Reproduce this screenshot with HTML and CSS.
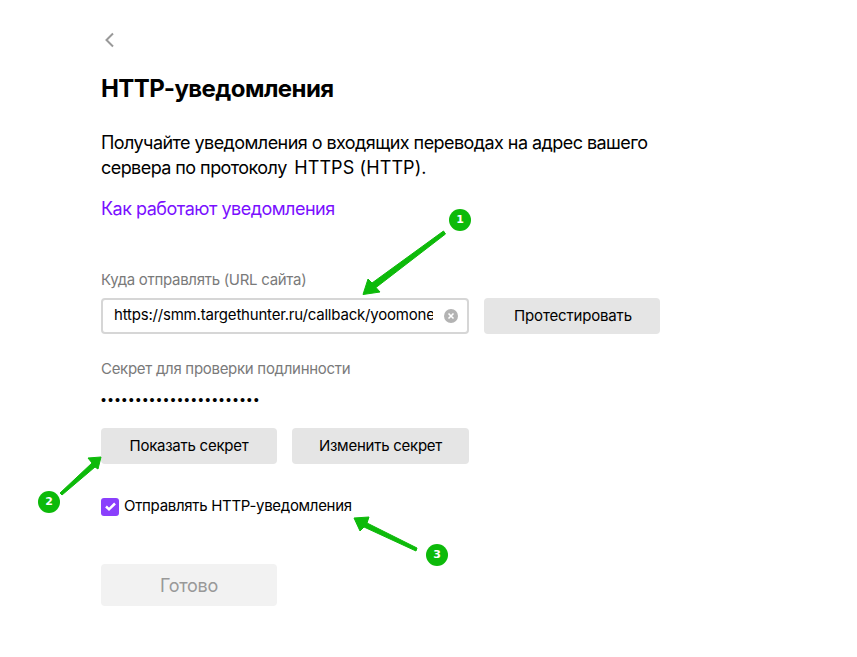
FILE: index.html
```html
<!DOCTYPE html>
<html lang="ru">
<head>
<meta charset="utf-8">
<title>HTTP-уведомления</title>
<link rel="stylesheet" href="styles.css">
</head>
<body>
<main class="page">
  <a class="back" href="#" aria-label="Назад">
    <svg width="14" height="16" viewBox="0 0 14 16"><path d="M12 1.500 5.500 8l6.500 6.500" fill="none" stroke="#999" stroke-width="2"/></svg>
  </a>
  <h1 class="title">HTTP-уведомления</h1>
  <p class="lead">Получайте уведомления о входящих переводах на адрес вашего<br>сервера по протоколу <span class="latin">HTTPS (HTTP).</span></p>
  <a class="link" href="#">Как работают уведомления</a>
  <div class="label label-url">Куда отправлять (URL сайта)</div>
  <div class="row">
    <div class="input">
      <span class="input-text">https://smm.targethunter.ru/callback/yoomoney</span>
      <svg class="clear" width="14" height="14" viewBox="0 0 14 14"><circle cx="7" cy="7" r="7" fill="#b3b3b3"/><path d="M4.500 4.500l5 5m0-5l-5 5" stroke="#fff" stroke-width="1.600"/></svg>
    </div>
    <button class="btn btn-test" type="button">Протестировать</button>
  </div>
  <div class="label label-secret">Секрет для проверки подлинности</div>
  <div class="dots">•••••••••••••••••••••••</div>
  <div class="row row-secret">
    <button class="btn btn-half" type="button">Показать секрет</button>
    <button class="btn btn-half btn-change" type="button">Изменить секрет</button>
  </div>
  <label class="check">
    <span class="box"><svg width="18" height="18" viewBox="0 0 18 18"><path d="M5 8.500 8 11.300 14 5.500" fill="none" stroke="#fff" stroke-width="2.500"/></svg></span>
    <span class="check-text">Отправлять HTTP-уведомления</span>
  </label>
  <button class="btn btn-done" type="button" disabled>Готово</button>
</main>

<svg class="arrows" width="857" height="657" viewBox="0 0 857 657" aria-hidden="true">
  <g class="arrow-shapes">
    <path d="M443.500 231 445.500 234 376 287.500 380 292 363 294.500 368 279 372 283z"/>
    <path d="M60 493 62 495 95 467 98 469 101 457 88 458 92 463z"/>
    <path d="M417 548 416 551 364 527 360 531 354 518 369 517 367 523z"/>
  </g>
</svg>
<span class="badge badge-1">1</span>
<span class="badge badge-2">2</span>
<span class="badge badge-3">3</span>
</body>
</html>
```
FILE: styles.css
```css
* { box-sizing: border-box; }
html, body { margin: 0; padding: 0; background: #fff; }
body {
  width: 857px;
  height: 657px;
  position: relative;
  overflow: hidden;
  font-family: Inter, "Noto Sans", sans-serif;
  color: #000;
}
.page {
  display: flex;
  flex-direction: column;
  align-items: flex-start;
  padding: 32px 0 0 101px;
}
.back { display: block; height: 16px; line-height: 0; }
.title {
  margin: 26px 0 0;
  font-size: 24px;
  line-height: 30px;
  font-weight: 700;
  letter-spacing: -0.560px;
}
.lead {
  margin: 26px 0 0;
  font-size: 18px;
  line-height: 25px;
  font-weight: 400;
  letter-spacing: -0.560px;
}
.latin {
  letter-spacing: 0.100px;
  margin-left: 3px;
}
.link {
  margin-top: 16px;
  font-size: 18px;
  line-height: 25px;
  color: #7a10ff;
  text-decoration: none;
  letter-spacing: -0.500px;
}
.label {
  font-size: 15px;
  line-height: 20px;
  color: #7a7a7a;
  letter-spacing: -0.290px;
}
.label-url { margin-top: 49px; }
.label-secret { margin-top: 25px; }
.row { display: flex; margin-top: 8px; }
.row-secret { margin-top: 18px; }
.input {
  width: 368px;
  height: 36px;
  border: 2px solid #d6d6d6;
  border-radius: 4px;
  display: flex;
  align-items: center;
  padding: 0 9px 0 11px;
}
.input-text {
  flex: 1;
  min-width: 0;
  overflow: hidden;
  white-space: nowrap;
  font-size: 15px;
  line-height: 20px;
  letter-spacing: -0.200px;
  margin: 0 11px 2px 0;
}
.clear { flex: none; }
.btn {
  height: 36px;
  border: 0;
  border-radius: 4px;
  background: #e5e5e5;
  font: inherit;
  font-size: 15px;
  letter-spacing: -0.250px;
  color: #000;
  padding: 0 0 2px;
}
.btn-test { width: 176px; margin-left: 15px; letter-spacing: -0.170px; padding-left: 2px; }
.btn-half { width: 176px; }
.btn-change { width: 177px; margin-left: 15px; }
.dots {
  font-family: "Liberation Sans", sans-serif;
  font-size: 14.500px;
  line-height: 20px;
  height: 20px;
  letter-spacing: 1.870px;
  margin-top: 11px;
}
.check {
  display: flex;
  align-items: flex-start;
  gap: 5px;
  height: 18px;
  margin-top: 34px;
  font-size: 15px;
  line-height: 16px;
  letter-spacing: -0.300px;
}
.box {
  flex: none;
  width: 18px;
  height: 18px;
  border-radius: 3px;
  background: #8a3ffc;
  display: block;
}
.box svg { display: block; }
.btn-done {
  margin-top: 48px;
  width: 176px;
  height: 42px;
  background: #f2f2f2;
  color: #999;
  font-size: 18px;
  padding: 0;
}
.arrows { position: absolute; left: 0; top: 0; pointer-events: none; }
.arrow-shapes {
  fill: #0dba0a;
  stroke: #0dba0a;
  stroke-width: 1;
  stroke-linejoin: round;
}
.badge {
  position: absolute;
  width: 22px;
  height: 22px;
  border-radius: 50%;
  background: #0dba0a;
  color: #fff;
  font-family: "DejaVu Sans", sans-serif;
  font-size: 11px;
  font-weight: 700;
  line-height: 22px;
  text-align: center;
}
.badge-1 { left: 449px; top: 209px; }
.badge-2 { left: 38px; top: 491px; }
.badge-3 { left: 426px; top: 544px; }
```
